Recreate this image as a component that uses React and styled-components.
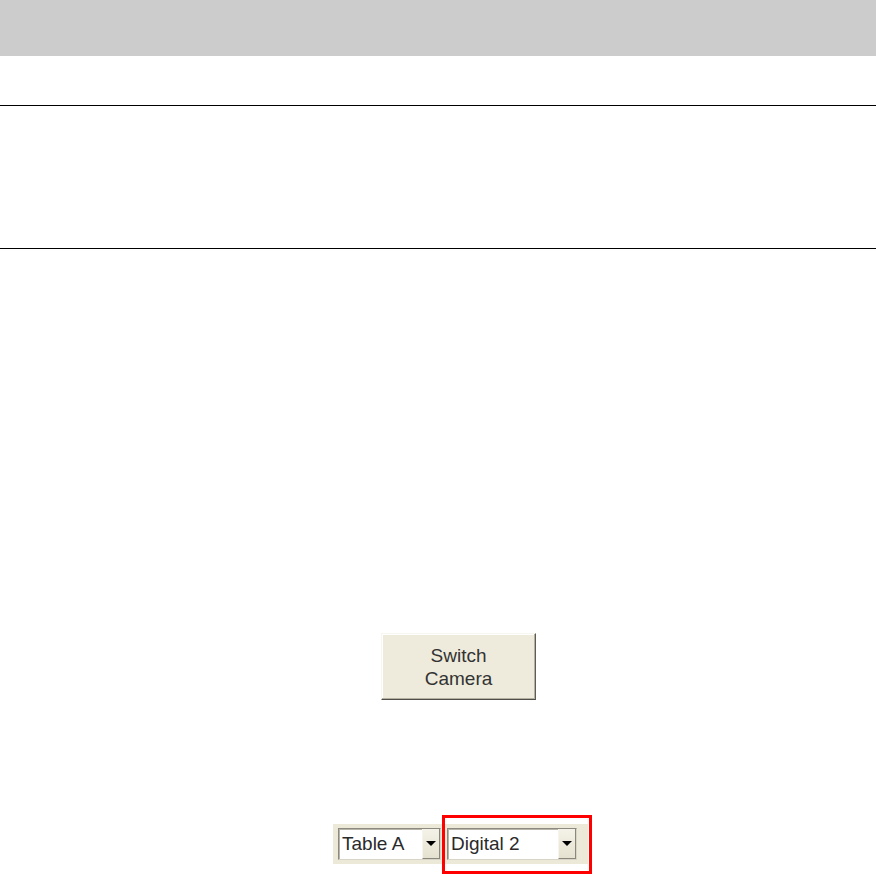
import React from 'react';
import styled, { createGlobalStyle } from 'styled-components';

const GlobalStyle = createGlobalStyle`
  html, body {
    margin: 0;
    padding: 0;
    background: #ffffff;
    font-family: "Liberation Sans", Arial, sans-serif;
  }
`;

const Page = styled.div`
  width: 876px;
  height: 874px;
  display: flex;
  flex-direction: column;
  overflow: hidden;
`;

const Band = styled.div`
  height: 56px;
  background: #cccccc;
`;

const Rule = styled.div`
  height: 1px;
  background: #000000;
  margin-top: ${p => p.gap}px;
`;

const ButtonRow = styled.div`
  display: flex;
  padding-left: 381px;
  margin-top: 384px;
`;

const XpButton = styled.button`
  width: 155px;
  height: 67px;
  box-sizing: border-box;
  padding: 0;
  background: #eeebdc;
  border: 1px solid;
  border-color: #f7f6ef #5e5d55 #4f4e48 #f7f6ef;
  box-shadow: inset -1px -1px 0 #b4b1a2, inset 1px 1px 0 #ffffff;
  color: #333333;
  font-family: "Liberation Sans", Arial, sans-serif;
  font-size: 19px;
  line-height: 23px;
  text-align: center;
`;

const SelectRow = styled.div`
  display: flex;
  padding-left: 333px;
  margin-top: 124px;
`;

const SelectStrip = styled.div`
  position: relative;
  display: flex;
  gap: 6px;
  padding: 4px 11px 4px 5px;
  background: #ece9d8;
`;

const Select = styled.div`
  width: ${p => p.width}px;
  height: 32px;
  box-sizing: border-box;
  display: flex;
  align-items: center;
  background: #ffffff;
  border: 1px solid;
  border-color: #8c8a80 #d8d5c8 #d8d5c8 #8c8a80;
  box-shadow: inset 1px 1px 0 #b8b5a8;
`;

const Value = styled.span`
  flex: 1;
  padding-left: 3px;
  font-size: 19px;
  color: #2a2a2a;
  white-space: nowrap;
`;

const ArrowBox = styled.div`
  width: 18px;
  height: 100%;
  box-sizing: border-box;
  display: flex;
  align-items: center;
  justify-content: center;
  background: linear-gradient(#f4f2e8, #e6e2d0);
  border-left: 1px solid #f6f4ec;
  border-bottom: 1px solid #8a877c;
  border-right: 1px solid #8a877c;
`;

const Arrow = styled.span`
  width: 0;
  height: 0;
  border-left: 5px solid transparent;
  border-right: 5px solid transparent;
  border-top: 5px solid #000000;
`;

const Highlight = styled.div`
  position: absolute;
  left: 109px;
  top: -9px;
  width: 150px;
  height: 59px;
  box-sizing: border-box;
  border: 3px solid #ff0000;
  pointer-events: none;
`;

function Dropdown({ width, value }) {
  return (
    <Select width={width}>
      <Value>{value}</Value>
      <ArrowBox>
        <Arrow />
      </ArrowBox>
    </Select>
  );
}

export default function App() {
  return (
    <>
      <GlobalStyle />
      <Page>
        <Band />
        <Rule gap={49} />
        <Rule gap={142} />
        <ButtonRow>
          <XpButton>
            Switch
            <br />
            Camera
          </XpButton>
        </ButtonRow>
        <SelectRow>
          <SelectStrip>
            <Dropdown width={103} value="Table A" />
            <Dropdown width={130} value="Digital 2" />
            <Highlight />
          </SelectStrip>
        </SelectRow>
      </Page>
    </>
  );
}
